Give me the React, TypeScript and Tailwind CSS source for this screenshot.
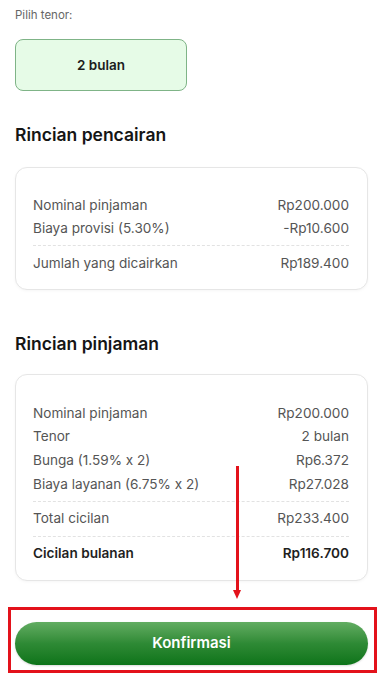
import React from 'react';

type Row = { label: string; value: string; bold?: boolean };

const pencairan: Row[][] = [
  [
    { label: 'Nominal pinjaman', value: 'Rp200.000' },
    { label: 'Biaya provisi (5.30%)', value: '-Rp10.600' },
  ],
  [{ label: 'Jumlah yang dicairkan', value: 'Rp189.400' }],
];

const pinjaman: Row[][] = [
  [
    { label: 'Nominal pinjaman', value: 'Rp200.000' },
    { label: 'Tenor', value: '2 bulan' },
    { label: 'Bunga (1.59% x 2)', value: 'Rp6.372' },
    { label: 'Biaya layanan (6.75% x 2)', value: 'Rp27.028' },
  ],
  [{ label: 'Total cicilan', value: 'Rp233.400' }],
  [{ label: 'Cicilan bulanan', value: 'Rp116.700', bold: true }],
];

function DetailCard({ groups, className }: { groups: Row[][]; className: string }) {
  return (
    <div className={`rounded-[12px] border border-[#e6e6e6] bg-white pl-[17px] pr-[18px] shadow-[0_1px_3px_rgba(0,0,0,0.04)] ${className}`}>
      {groups.map((group, gi) => (
        <div key={gi}>
          {gi > 0 && <div className="my-[5px] border-t border-dashed border-[#e2e2e2]" />}
          {group.map((r) => (
            <div
              key={r.label}
              className={`flex h-[23.7px] items-center justify-between text-[13.6px] ${
                r.bold ? 'font-semibold text-[#1f1f1f]' : 'text-[#555555]'
              }`}
            >
              <span>{r.label}</span>
              <span>{r.value}</span>
            </div>
          ))}
        </div>
      ))}
    </div>
  );
}

export default function App() {
  return (
    <div className="relative h-[676px] w-[383px] overflow-hidden bg-white font-['Inter',sans-serif]">
      <div className="flex flex-col px-[15px]">
        <p className="mt-[7px] h-[16px] text-[11.5px] leading-[16px] text-[#666666]">Pilih tenor:</p>
        <div className="mt-[16px] flex h-[52px] w-[172px] items-center justify-center rounded-[8px] border border-[#7fb487] bg-[#e6fbe7] text-[13.5px] font-semibold text-[#1c1c1c]">
          2 bulan
        </div>

        <h2 className="mt-[32px] h-[24px] text-[17.5px] font-semibold leading-[24px] text-[#151515]">Rincian pencairan</h2>
        <DetailCard groups={pencairan} className="mt-[20px] pt-[25px] pb-[14px]" />

        <h2 className="mt-[42px] h-[24px] text-[17.5px] font-semibold leading-[24px] text-[#151515]">Rincian pinjaman</h2>
        <DetailCard groups={pinjaman} className="mt-[18px] pt-[26px] pb-[15px]" />

        <button className="mt-[41px] flex h-[43px] w-full items-center justify-center rounded-full bg-gradient-to-b from-[#62ad62] via-[#2e8a35] to-[#0b7419] text-[15px] font-semibold text-white shadow-[0_1px_2px_rgba(0,0,0,0.15)]">
          Konfirmasi
        </button>
      </div>

      {/* annotation arrow */}
      <div className="absolute left-[236px] top-[466px] h-[126px] w-[3px] bg-[#e3121b]" />
      <div className="absolute left-[233px] top-[590px] h-0 w-0 border-x-[4.5px] border-t-[9px] border-x-transparent border-t-[#e3121b]" />
      {/* annotation box */}
      <div className="absolute left-[8px] top-[607px] h-[66px] w-[369px] border-[3px] border-[#e3121b]" />
    </div>
  );
}
